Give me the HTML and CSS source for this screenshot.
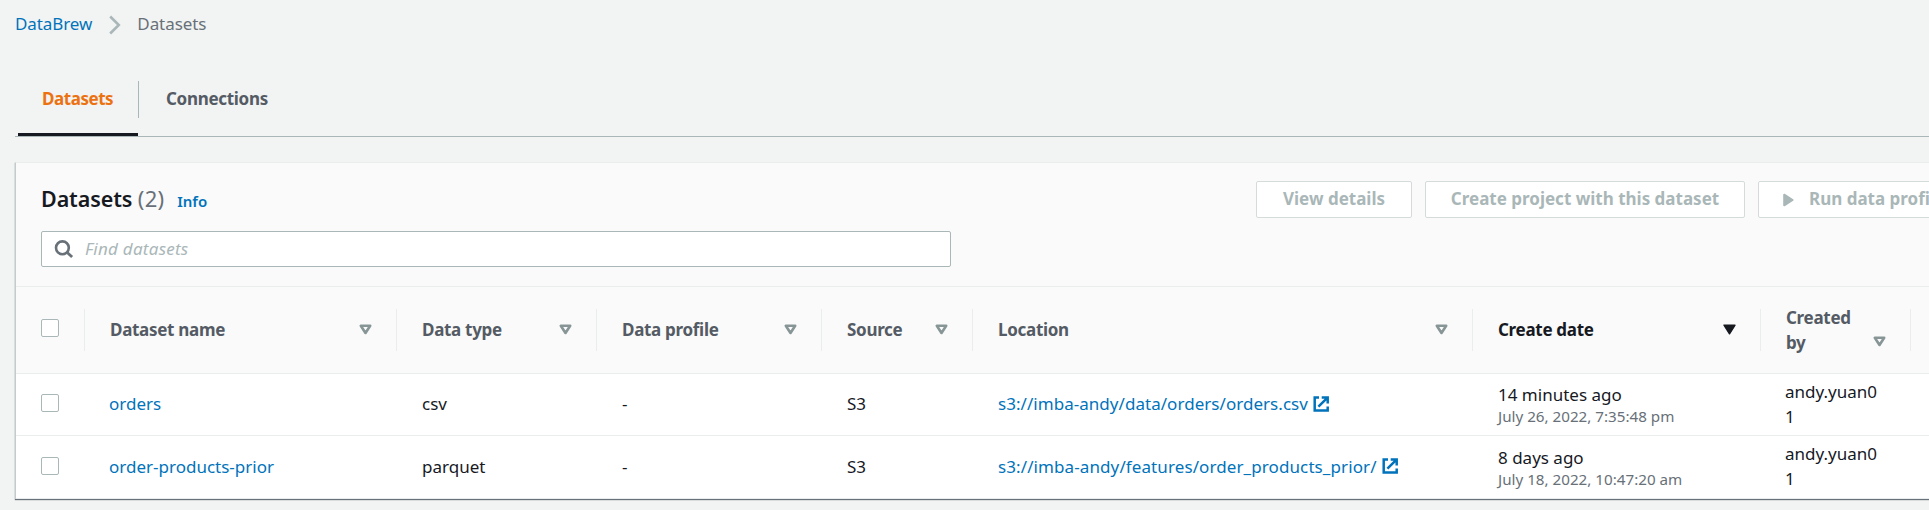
FILE: index.html
```
<!DOCTYPE html>
<html lang="en">
<head>
<meta charset="utf-8">
<title>DataBrew - Datasets</title>
<link rel="stylesheet" href="styles.css">
</head>
<body>
<svg class="defs" width="0" height="0">
  <symbol id="sort" viewBox="0 0 13 11"><path d="M1.8 1.8h9.4L6.5 9z" fill="none" stroke="currentColor" stroke-width="2.6" stroke-linejoin="round"/></symbol>
  <symbol id="sorted" viewBox="0 0 13 11"><path d="M1 1.2h11L6.5 9.8z" fill="currentColor" stroke="currentColor" stroke-width="1.4" stroke-linejoin="round"/></symbol>
  <symbol id="external" viewBox="0 0 16 16"><path d="M6 1.4H1.7v13.2h13V10.6M8.7 1.4h6v6M14.3 1.8L5.4 10.7" fill="none" stroke="currentColor" stroke-width="2.5"/></symbol>
</svg>
<nav class="breadcrumb">
  <a class="link" href="#">DataBrew</a>
  <svg class="chevron" viewBox="0 0 12 20"><path d="M1.2 1.5L9.8 10l-8.6 8.5" fill="none" stroke="currentColor" stroke-width="2.6"/></svg>
  <span>Datasets</span>
</nav>
<div class="tabs">
  <div class="tab active">Datasets</div>
  <div class="tab">Connections</div>
</div>
<main class="panel">
  <header class="panel-head">
    <div class="title-row">
      <h2>Datasets <span class="count">(2)</span></h2>
      <a class="info link" href="#">Info</a>
      <div class="actions">
        <button class="btn">View details</button>
        <button class="btn wide">Create project with this dataset</button>
        <button class="btn run"><svg class="play" viewBox="0 0 11 14"><path d="M1.2 1.7v10.6L9.6 7z" fill="currentColor" stroke="currentColor" stroke-width="2" stroke-linejoin="round"/></svg>Run data profile</button>
      </div>
    </div>
    <div class="search">
      <svg class="lens" viewBox="0 0 20 20"><circle cx="8.4" cy="8.8" r="6.4" fill="none" stroke="currentColor" stroke-width="2.6"/><path d="M12.9 13.2l5.2 4.8" stroke="currentColor" stroke-width="2.8"/></svg>
      <span>Find datasets</span>
    </div>
  </header>
  <div class="row head">
    <div class="cell check"><span class="box"></span></div>
    <div class="cell">Dataset name<svg class="tri"><use href="#sort"/></svg></div>
    <div class="cell">Data type<svg class="tri"><use href="#sort"/></svg></div>
    <div class="cell">Data profile<svg class="tri"><use href="#sort"/></svg></div>
    <div class="cell">Source<svg class="tri"><use href="#sort"/></svg></div>
    <div class="cell">Location<svg class="tri"><use href="#sort"/></svg></div>
    <div class="cell current">Create date<svg class="tri"><use href="#sorted"/></svg></div>
    <div class="cell created">Created<br>by<svg class="tri"><use href="#sort"/></svg></div>
  </div>
  <div class="row">
    <div class="cell check"><span class="box"></span></div>
    <div class="cell"><a class="link" href="#">orders</a></div>
    <div class="cell">csv</div>
    <div class="cell">-</div>
    <div class="cell">S3</div>
    <div class="cell"><a class="link path-a" href="#">s3://imba-andy/data/orders/orders.csv</a><svg class="ext"><use href="#external"/></svg></div>
    <div class="cell date"><span>14 minutes ago</span><small>July 26, 2022, 7:35:48 pm</small></div>
    <div class="cell user">andy.yuan0<br>1</div>
  </div>
  <div class="row last">
    <div class="cell check"><span class="box"></span></div>
    <div class="cell"><a class="link" href="#">order-products-prior</a></div>
    <div class="cell">parquet</div>
    <div class="cell">-</div>
    <div class="cell">S3</div>
    <div class="cell"><a class="link path-b" href="#">s3://imba-andy/features/order_products_prior/</a><svg class="ext"><use href="#external"/></svg></div>
    <div class="cell date"><span>8 days ago</span><small>July 18, 2022, 10:47:20 am</small></div>
    <div class="cell user">andy.yuan0<br>1</div>
  </div>
</main>
</body>
</html>
```
FILE: styles.css
```
* { box-sizing: border-box; }
body {
  margin: 0;
  height: 510px;
  padding-left: 15px;
  overflow: hidden;
  background: #f2f3f3;
  color: #16191f;
  font: 17px/25px "Noto Sans", sans-serif;
}
.defs { position: absolute; }
.link { color: #0073bb; text-decoration: none; }
.breadcrumb {
  display: flex;
  align-items: center;
  height: 48px;
  padding-bottom: 2px;
  color: #687078;
  letter-spacing: -0.08px;
}
.chevron { width: 12px; height: 20px; margin: 3px 16px 0 17px; color: #aab7b8; }
.tabs {
  display: flex;
  height: 89px;
  padding: 33px 0 0 3px;
  border-bottom: 1px solid #aab7b8;
  color: #545b64;
  font-weight: 700;
}
.tab { height: 37px; padding: 5px 27px 0; letter-spacing: -0.3px; }
.active {
  position: relative;
  width: 121px;
  padding: 5px 0 0 24px;
  border-right: 1px solid #aab7b8;
  color: #ec7211;
  letter-spacing: -0.45px;
}
.active::after {
  content: "";
  position: absolute;
  left: 0;
  top: 52px;
  width: 120px;
  height: 3px;
  background: #16191f;
}
.panel {
  height: 337px;
  margin-top: 25px;
  border-top: 1px solid #eaeded;
  border-left: 1px solid #c3cbcb;
  background: #fff;
  box-shadow: 0 1px 1px #687078;
}
.panel-head {
  height: 124px;
  padding: 18px 0 0 25px;
  border-bottom: 1px solid #eaeded;
  background: #fafafa;
}
.title-row { display: flex; height: 38px; white-space: nowrap; }
h2 { height: 36px; margin: 0; font-size: 21.5px; line-height: 34px; font-weight: 650; letter-spacing: -0.1px; }
.count { color: #687078; font-weight: 400; font-size: 22px; letter-spacing: 0.2px; }
.info { margin-left: 13px; font-size: 15px; font-weight: 600; line-height: 40px; }
.actions { display: flex; gap: 13px; margin-left: auto; margin-right: -84px; }
.btn {
  display: flex;
  align-items: center;
  justify-content: center;
  width: 156px;
  height: 37px;
  padding: 0 0 3px;
  border: 1px solid #d5dbdb;
  border-radius: 2px;
  background: #fff;
  color: #aab7b8;
  font: 700 17px/25px "Noto Sans", sans-serif;
  white-space: nowrap;
}
.wide { width: 320px; }
.run { width: 255px; justify-content: flex-start; padding-left: 24px; }
.play { width: 11px; height: 14px; margin: 4px 15px 0 0; }
.search {
  display: flex;
  align-items: center;
  width: 910px;
  height: 36px;
  margin-top: 12px;
  padding-left: 12px;
  border: 1px solid #aab7b8;
  border-radius: 2px;
  background: #fff;
  color: #aab7b8;
  font-style: italic;
  letter-spacing: 0.25px;
}
.search span { padding-bottom: 1px; }
.lens { width: 20px; height: 20px; margin-right: 11px; color: #687078; }
.row {
  display: grid;
  grid-template-columns: 69px 312px 200px 225px 151px 500px 288px 150px;
  height: 62px;
  border-bottom: 1px solid #eaeded;
}
.last { height: 63px; }
.cell { display: flex; align-items: center; padding: 0 0 2px 24px; white-space: nowrap; }
.row:not(.head) .cell:nth-child(n+3):not(.user) { padding-left: 25px; }
.row .check { padding: 0 0 3px 25px; }
.box {
  width: 18px;
  height: 18px;
  border: 1px solid #aab7b8;
  border-radius: 2px;
  background: #fff;
}
.head {
  grid-template-rows: 42px;
  height: 87px;
  padding: 22px 0;
  background: #fafafa;
  color: #545b64;
  font-weight: 700;
}
.head .cell { padding: 0 24px 2px 25px; border-right: 1px solid #eaeded; letter-spacing: -0.3px; }
.head .check { padding: 0 0 5px 25px; }
.tri { width: 13px; height: 11px; margin: 1px 0 0 auto; color: #879596; }
.current { color: #16191f; }
.current .tri { color: #16191f; }
.head .created { padding-bottom: 1px; }
.created .tri { margin-top: 24px; }
.ext { width: 16px; height: 16px; margin-left: 5px; color: #0073bb; }
.path-a { letter-spacing: 0.04px; }
.path-b { letter-spacing: 0.1px; }
.row .date { flex-direction: column; align-items: flex-start; justify-content: center; }
.date small { font-size: 15.2px; line-height: 18px; color: #687078; }
```
